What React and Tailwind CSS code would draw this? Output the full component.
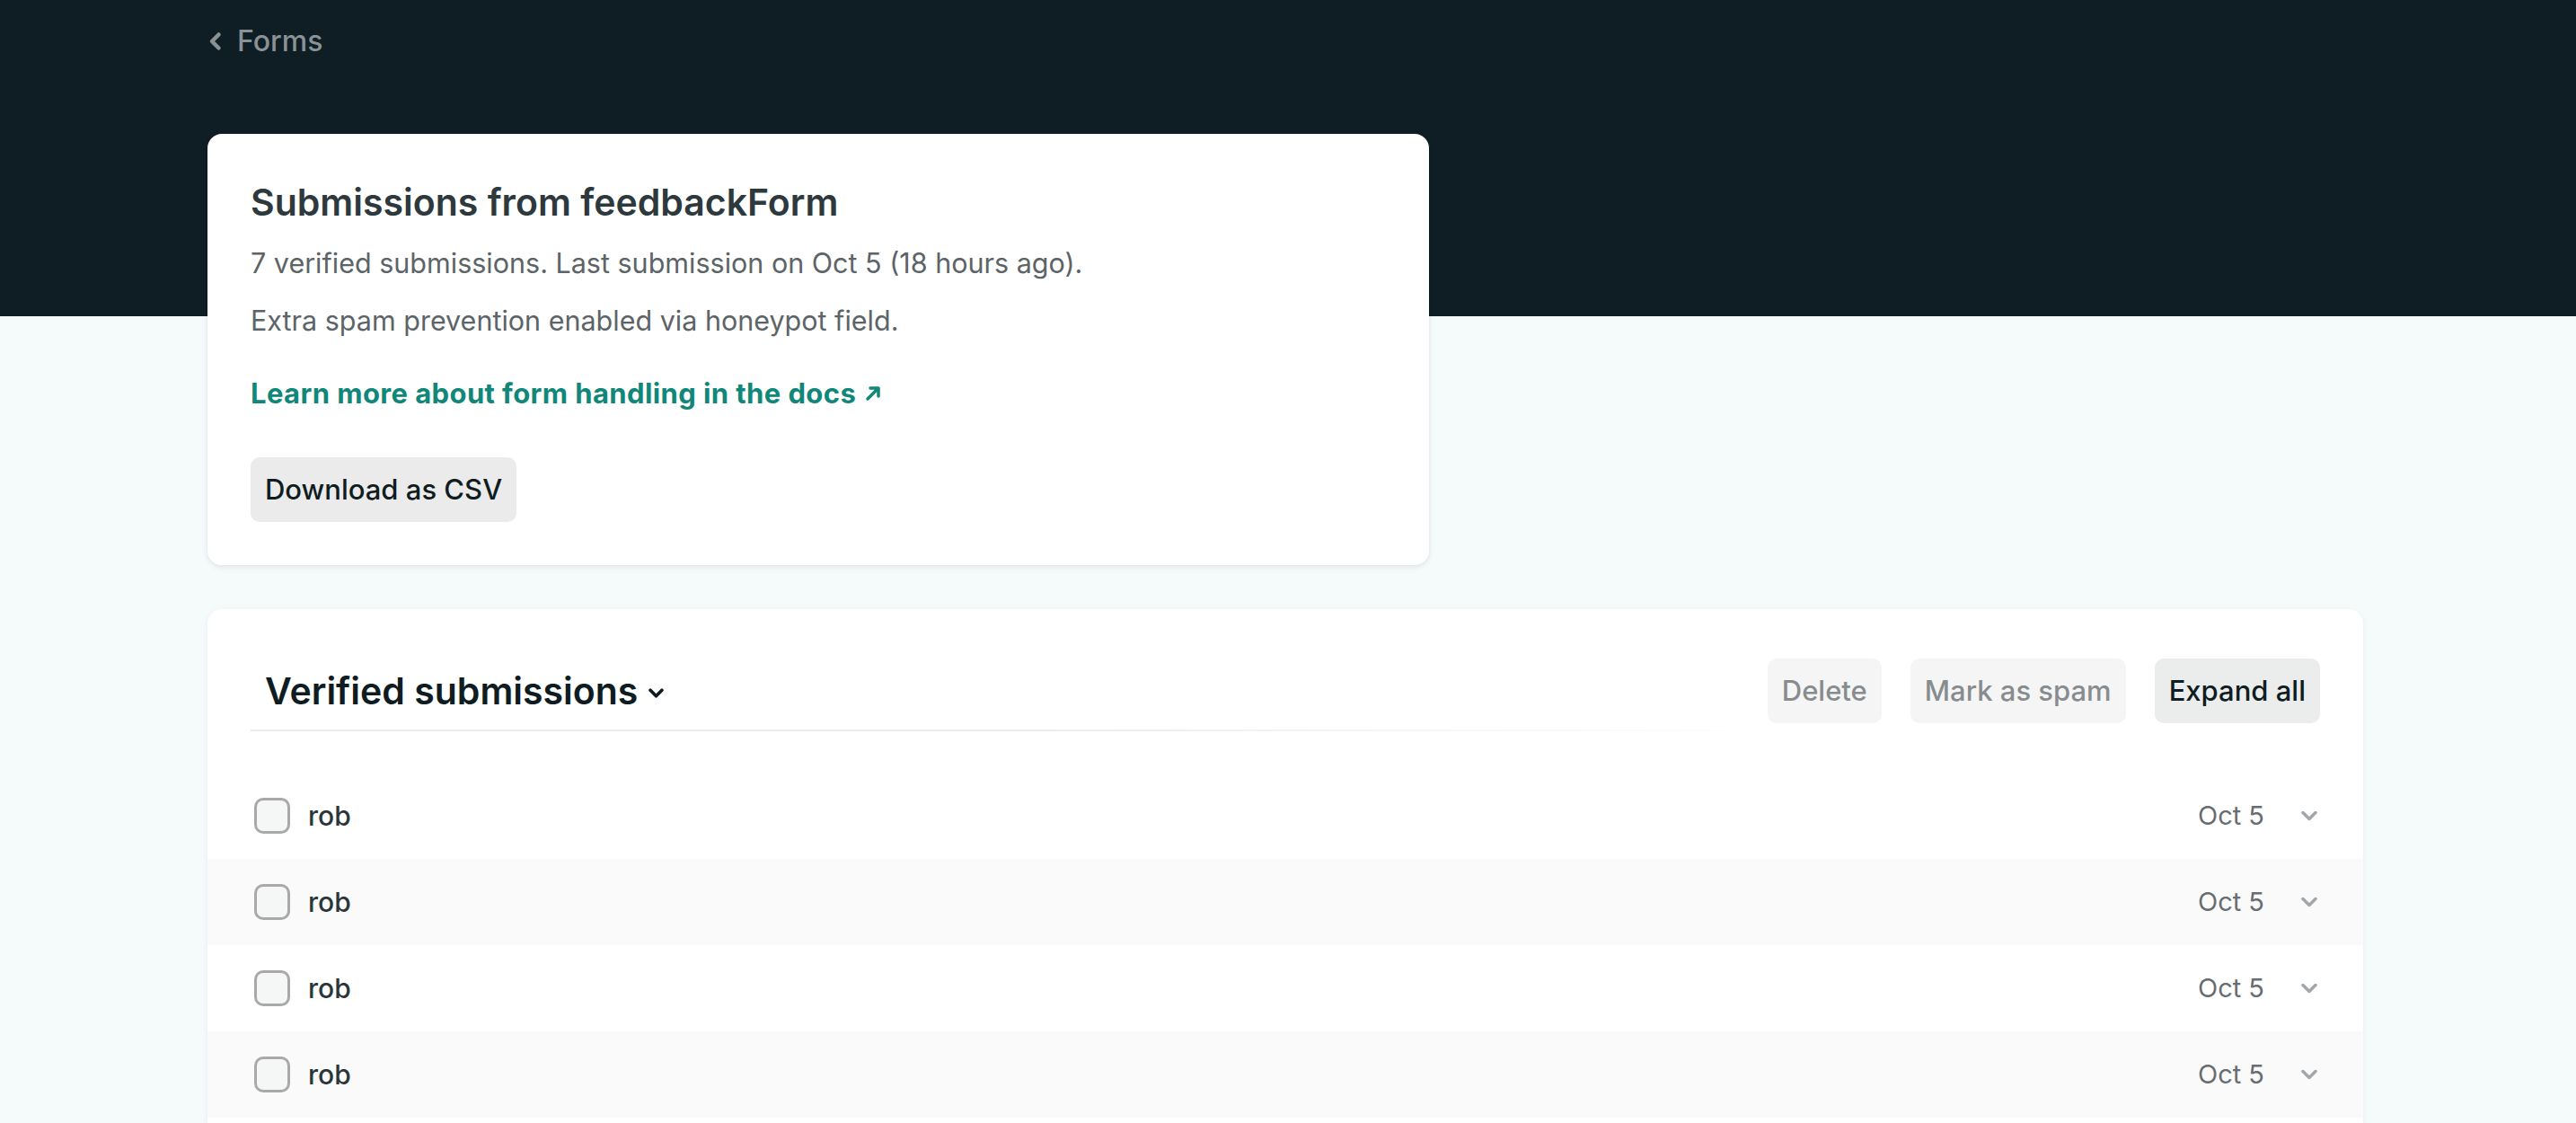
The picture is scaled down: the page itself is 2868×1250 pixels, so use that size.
import { useState } from "react";

const submissions = [
  { id: 1, name: "rob", date: "Oct 5" },
  { id: 2, name: "rob", date: "Oct 5" },
  { id: 3, name: "rob", date: "Oct 5" },
  { id: 4, name: "rob", date: "Oct 5" },
  { id: 5, name: "rob", date: "Oct 5" },
  { id: 6, name: "rob", date: "Oct 5" },
  { id: 7, name: "rob", date: "Oct 5" },
];

function Chevron({ className, strokeWidth = 3 }) {
  return (
    <svg viewBox="0 0 18 12" fill="none" stroke="currentColor" strokeWidth={strokeWidth} className={className}>
      <path d="M2 2.5l7 7 7-7" strokeLinecap="round" strokeLinejoin="round" />
    </svg>
  );
}

function SubmissionRow({ item, striped }) {
  const [checked, setChecked] = useState(false);

  return (
    <div className={`flex h-[96px] items-center pl-[52px] pr-[51px] ${striped ? "bg-[#fafafa]" : "bg-white"}`}>
      <button
        onClick={() => setChecked(!checked)}
        className="h-10 w-10 shrink-0 rounded-[10px] border-[3.5px] border-[#a9a9a9] bg-[#f5f6f6]"
        aria-label="Select submission"
      />
      <span className="ml-5 text-[30px] font-medium leading-[48px] text-[#2b363b]">{item.name}</span>
      <span className="ml-auto text-[29px] leading-[48px] text-[#676d71]">{item.date}</span>
      <Chevron className="ml-[41px] h-[12px] w-[18px] text-[#a2a6a8]" strokeWidth={3.5} />
    </div>
  );
}

export default function App() {
  return (
    <div className="min-h-screen bg-[linear-gradient(to_bottom,#0f1d24_352px,#f5fafa_352px)] font-['Inter',sans-serif]">
      <div className="ml-[231px] w-[2400px]">
        <nav className="h-[149px] pt-[22px]">
          <a href="#" className="inline-flex items-center gap-[16px] text-[32px] font-medium leading-[48px] text-[#8a9295]">
            <svg viewBox="0 0 17 22" fill="none" stroke="currentColor" strokeWidth="4.5" className="h-[22px] w-[17px]">
              <path d="M12.5 3.5L5 11l7.5 7.5" strokeLinecap="round" strokeLinejoin="round" />
            </svg>
            Forms
          </a>
        </nav>

        <section className="w-[1360px] rounded-[16px] bg-white px-12 pt-[52px] pb-[48px] shadow-[0_2px_6px_rgba(15,29,36,0.10)]">
          <h1 className="text-[41px] font-semibold leading-[48px] text-[#2e393e]">Submissions from feedbackForm</h1>
          <p className="mt-[20px] text-[30.5px] leading-[48px] text-[#5d6468]">
            7 verified submissions. Last submission on Oct 5 (18 hours ago).
          </p>
          <p className="mt-[16px] text-[30.5px] leading-[48px] text-[#5d6468]">
            Extra spam prevention enabled via honeypot field.
          </p>
          <a href="#" className="mt-[33px] flex items-center gap-[10px] text-[31px] font-bold leading-[48px] tracking-[0.4px] text-[#11877a]">
            Learn more about form handling in the docs
            <svg viewBox="0 0 18 18" fill="none" stroke="currentColor" strokeWidth="3.5" className="h-[18px] w-[18px]">
              <path d="M3 15L15 3M6 3h9v9" strokeLinecap="round" strokeLinejoin="round" />
            </svg>
          </a>
          <button className="mt-[47px] h-[72px] rounded-[10px] bg-[#ebebeb] px-4 text-[31px] font-medium text-[#0f1c22]">
            Download as CSV
          </button>
        </section>

        <section className="mt-[49px] rounded-[16px] bg-white pt-[55px] pb-12 shadow-[0_2px_6px_rgba(15,29,36,0.06)]">
          <div className="flex h-[72px] items-center justify-between px-12">
            <button className="flex items-center gap-[12px] px-4 text-[41px] font-semibold leading-[48px] text-[#0f1c22]">
              Verified submissions
              <Chevron className="mt-[4px] h-[11px] w-[17px]" strokeWidth={4} />
            </button>
            <div className="flex gap-8">
              <button className="h-[72px] rounded-[10px] bg-[#f5f5f5] px-4 text-[31px] font-medium text-[#878c8f]">Delete</button>
              <button className="h-[72px] rounded-[10px] bg-[#f5f5f5] px-4 text-[31px] font-medium text-[#878c8f]">Mark as spam</button>
              <button className="h-[72px] rounded-[10px] bg-[#ebecec] px-4 text-[31px] font-medium text-[#0f1c22]">Expand all</button>
            </div>
          </div>
          <div className="ml-12 mt-[7px] h-[2px] w-[1700px] bg-gradient-to-r from-[#ececec] via-[#ececec] to-transparent" />

          <div className="mt-[46px]">
            {submissions.map((item, i) => (
              <SubmissionRow key={item.id} item={item} striped={i % 2 === 1} />
            ))}
          </div>
        </section>
      </div>
    </div>
  );
}
